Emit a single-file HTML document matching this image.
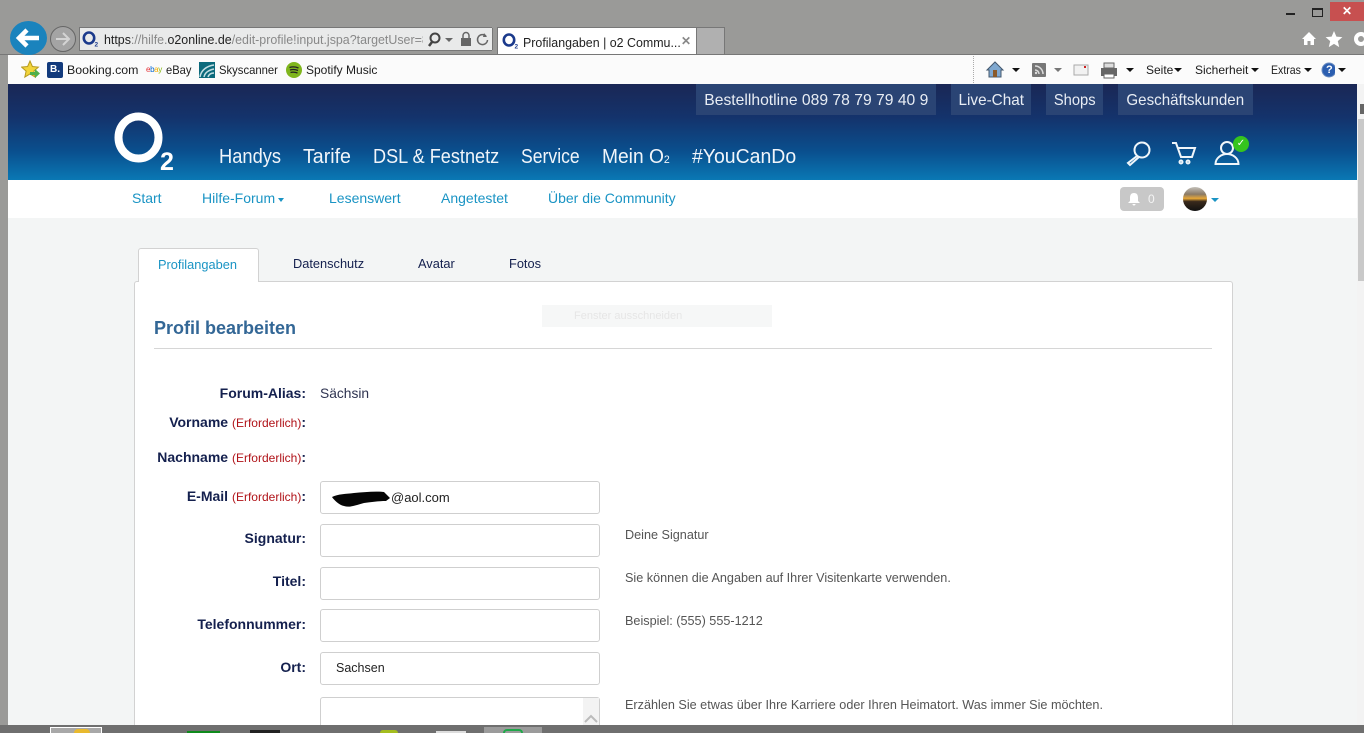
<!DOCTYPE html>
<html lang="de"><head><meta charset="utf-8"><title>Profilangaben | o2 Community</title>
<style>
html,body{margin:0;padding:0;width:1364px;height:733px;overflow:hidden;background:#9a9a98;font-family:"Liberation Sans",sans-serif}
.a{position:absolute;white-space:nowrap;line-height:1;transform-origin:left center}
.box{position:absolute;box-sizing:border-box;background:#fff;border:1px solid #cfcfcf;border-radius:3px}
.tb{font-size:12px;color:#1c1c1c}
.h{color:#f1f5fa;font-size:20px}
.top{position:absolute;top:84px;height:31px;background:#2a4474;color:#e8edf4;font-size:16px;line-height:33px;text-align:center;white-space:nowrap}
.top span{display:inline-block}
.n{color:#1a94c4;font-size:14px}
.l{color:#14204e;font-size:14px;font-weight:bold;right:1058px}
.l i{font-style:normal;font-weight:normal;font-size:12px;color:#b01218}
.hint{color:#555;font-size:12.650px;left:625px}
.t{font-size:12.800px;color:#14204e}
.arr{position:absolute;width:0;height:0;border-left:4px solid transparent;border-right:4px solid transparent;border-top:4px solid #111}
</style></head><body>
<div style="position:absolute;left:0;top:54px;width:1364px;height:1px;background:#777"></div>
<div style="position:absolute;left:8px;top:55px;width:1356px;height:29px;background:#fbfbfb"></div>

<!-- window controls -->
<div style="position:absolute;left:1286px;top:13px;width:9px;height:2px;background:#222"></div>
<div style="position:absolute;left:1312px;top:8px;width:9px;height:6px;border:1px solid #222;border-top-width:2px"></div>
<div style="position:absolute;left:1330px;top:2px;width:34px;height:19px;background:#c75050;color:#fff;font-size:12px;line-height:19px;text-align:center;font-weight:bold">✕</div>
<svg style="position:absolute;left:1300px;top:28px" width="64" height="22" viewBox="0 0 64 22"><path d="M2 11l7-7 7 7h-2v6h-3.500v-4h-3v4H4v-6z" fill="#fff"/><path d="M34 3l2.400 5.600 6 .5-4.600 4 1.400 6-5.200-3.200-5.200 3.200 1.400-6-4.600-4 6-.5z" fill="#fff"/><circle cx="61" cy="11" r="5" fill="none" stroke="#fff" stroke-width="4"/></svg>

<!-- back / forward -->
<div style="position:absolute;left:10px;top:21px;width:37px;height:34px;border-radius:50%;background:#1a83bd"></div>
<svg style="position:absolute;left:10px;top:21px" width="37" height="34"><path d="M9 17h20M17 9l-8 8 8 8" fill="none" stroke="#fff" stroke-width="4.500"/></svg>
<div style="position:absolute;left:50px;top:26px;width:24px;height:24px;border-radius:50%;border:1px solid #666;background:#a4a4a4"></div>
<svg style="position:absolute;left:51px;top:27px" width="24" height="24"><path d="M5 12h13M12 6l6 6-6 6" fill="none" stroke="#d4d4d4" stroke-width="2"/></svg>

<!-- address bar -->
<div style="position:absolute;left:79px;top:27px;width:413px;height:24px;box-sizing:border-box;background:#e9eaea;border:1px solid #777"></div>
<svg style="position:absolute;left:82px;top:30px" width="18" height="18"><ellipse cx="7" cy="8" rx="5.200" ry="5.500" fill="none" stroke="#1b3a8c" stroke-width="2.600"/><text x="12.500" y="16.500" font-family="Liberation Sans" font-weight="bold" font-size="6.500" fill="#1b3a8c">2</text></svg>
<div class="a" style="left:104px;top:33px;font-size:13px;color:#888;transform:scaleX(.955)"><span style="color:#222">https</span>://hilfe.<span style="color:#222">o2online.de</span>/edit-profile!input.jspa?targetUser=8</div>
<div style="position:absolute;left:423px;top:28px;width:69px;height:22px;background:#e9eaea;border-right:1px solid #777"></div>
<svg style="position:absolute;left:426px;top:31px" width="66" height="17"><circle cx="9" cy="7" r="4.500" fill="none" stroke="#444" stroke-width="2"/><path d="M6 11l-3 4" stroke="#444" stroke-width="2.500"/><path d="M19 7h8l-4 4z" fill="#666"/><rect x="35" y="7" width="10" height="8" fill="#666"/><path d="M37 7V4.500a3 3 0 0 1 6 0V7" fill="none" stroke="#666" stroke-width="1.500"/><path d="M60 5a5 5 0 1 0 1.500 4" fill="none" stroke="#666" stroke-width="1.500"/><path d="M58 2l3 4h-4z" fill="#666"/></svg>

<!-- tab -->
<div style="position:absolute;left:497px;top:27px;width:200px;height:27px;box-sizing:border-box;background:#fff;border:1px solid #777;border-bottom:0"></div>
<div style="position:absolute;left:697px;top:27px;width:28px;height:27px;box-sizing:border-box;background:#b0b0b0;border:1px solid #777;border-left:0;border-bottom:0"></div>
<svg style="position:absolute;left:502px;top:32px" width="18" height="18"><ellipse cx="7" cy="8" rx="5.200" ry="5.500" fill="none" stroke="#1b3a8c" stroke-width="2.600"/><text x="12.500" y="16.500" font-family="Liberation Sans" font-weight="bold" font-size="6.500" fill="#1b3a8c">2</text></svg>
<div class="a" style="left:523px;top:36px;font-size:13px;color:#222;transform:scaleX(.955)">Profilangaben | o2 Commu...</div>
<div class="a" style="left:681px;top:35px;font-size:12px;font-weight:bold;color:#888">✕</div>

<!-- favorites bar -->
<svg style="position:absolute;left:21px;top:60px" width="20" height="20"><path d="M9 1l2.400 5.500 6 .6-4.500 4 1.300 6L9 14l-5.200 3.100 1.300-6-4.500-4 6-.6z" fill="#f2d43a" stroke="#b69a20"/><path d="M9 12h5v-3l5 4.500-5 4.500v-3H9z" fill="#4fb04a"/></svg>
<div style="position:absolute;left:47px;top:62px;width:16px;height:16px;background:#123a7c;border-radius:2px;color:#fff;font:bold 10px/16px 'Liberation Sans';text-align:center">B.</div>
<div class="a tb" style="left:67px;top:64px;transform:scaleX(1.03)">Booking.com</div>
<div class="a" style="left:146px;top:66px;font-size:8px;letter-spacing:-.4px"><span style="color:#e53238">e</span><span style="color:#0064d2">b</span><span style="color:#f5af02">a</span><span style="color:#86b817">y</span></div>
<div class="a tb" style="left:166px;top:64px;transform:scaleX(.93)">eBay</div>
<svg style="position:absolute;left:199px;top:62px" width="16" height="16"><rect width="16" height="16" fill="#0c6a7c"/><path d="M1 15C2 8 8 4 15 3M5 15C6 10 10 8 15 7M9 15c1-3 3-4 6-4" fill="none" stroke="#c5dfe3" stroke-width="1.500"/></svg>
<div class="a tb" style="left:219px;top:64px;transform:scaleX(.94)">Skyscanner</div>
<svg style="position:absolute;left:286px;top:62px" width="16" height="16"><circle cx="8" cy="8" r="8" fill="#7fb51d"/><path d="M3.500 5.500c3-1 6-.8 9 .5M4 8c2.500-.8 5.500-.6 8 .5M4.500 10.500c2.200-.6 4.500-.5 7 .5" fill="none" stroke="#222" stroke-width="1.300"/></svg>
<div class="a tb" style="left:306px;top:64px">Spotify Music</div>
<div style="position:absolute;left:973px;top:56px;height:27px;border-left:1px dotted #aaa"></div>

<!-- command bar -->
<svg style="position:absolute;left:985px;top:60px" width="350" height="20">
<path d="M2 10l8-8 8 8h-2v7H4v-7z" fill="#7fa8d0" stroke="#44586e"/><rect x="8" y="10" width="4" height="7" fill="#8a5a2a"/>
<path d="M27 8h8l-4 4z" fill="#111"/>
<rect x="47" y="3" width="14" height="14" rx="1" fill="#777"/><path d="M50 6a8 8 0 0 1 8 8M50 10a4 4 0 0 1 4 4" stroke="#ddd" fill="none" stroke-width="1.500"/><circle cx="51" cy="13" r="1.200" fill="#ddd"/>
<path d="M73 8h8l-4 4z" fill="#777" transform="translate(-4 0)"/>
<rect x="89" y="5" width="14" height="10" fill="#f2f2f2" stroke="#aaa"/><rect x="99" y="6" width="2" height="2" fill="#c22"/>
<rect x="116" y="8" width="16" height="8" fill="#666"/><rect x="119" y="3" width="10" height="5" fill="#ddd" stroke="#666"/><rect x="119" y="14" width="10" height="4" fill="#fff" stroke="#666"/>
<path d="M141 8h8l-4 4z" fill="#111"/>
<path d="M189 8h8l-4 4z" fill="#111"/><path d="M266 8h8l-4 4z" fill="#111"/><path d="M319 8h8l-4 4z" fill="#111"/>
<circle cx="344" cy="10" r="7" fill="#2b5eb0" stroke="#6a8cc0"/>
</svg>
<div class="a tb" style="left:1146px;top:64px;">Seite</div>
<div class="a tb" style="left:1195px;top:64px;">Sicherheit</div>
<div class="a tb" style="left:1271px;top:64px;transform:scaleX(.88)">Extras</div>
<div class="a" style="left:1326px;top:65px;font-size:11px;font-weight:bold;color:#fff">?</div>
<div class="arr" style="left:1338px;top:68px"></div>

<!-- page -->
<div style="position:absolute;left:8px;top:84px;width:1349px;height:641px;background:#f3f5f5"></div>
<div style="position:absolute;left:8px;top:84px;width:1349px;height:96px;background:linear-gradient(#1a2755 0%,#14336c 35%,#0a4f8e 70%,#0a78b4 100%)"></div>
<div style="position:absolute;left:8px;top:180px;width:1349px;height:38px;background:#fff"></div>

<!-- scrollbar -->
<div style="position:absolute;left:1357px;top:84px;width:7px;height:641px;background:#f3f3f3"></div>
<div style="position:absolute;left:1358px;top:119px;width:6px;height:162px;background:#c9c9c9"></div>
<div style="position:absolute;left:1360px;top:104px;width:4px;height:10px;background:#666"></div>

<!-- top links -->
<div class="top" style="left:696px;width:240px"><span style="transform:scaleX(.98)">Bestellhotline 089 78 79 79 40 9</span></div>
<div class="top" style="left:951px;width:80px"><span style="transform:scaleX(.955)">Live-Chat</span></div>
<div class="top" style="left:1046px;width:57px"><span style="transform:scaleX(.92)">Shops</span></div>
<div class="top" style="left:1118px;width:135px"><span style="transform:scaleX(.945)">Geschäftskunden</span></div>

<!-- logo -->
<svg style="position:absolute;left:112px;top:110px" width="66" height="66"><ellipse cx="26.500" cy="27.500" rx="20" ry="21" fill="none" stroke="#fff" stroke-width="8"/><text x="48" y="60" font-family="Liberation Sans" font-weight="bold" font-size="25" fill="#fff">2</text></svg>

<!-- main nav -->
<div class="a h" style="left:219px;top:147px;transform:scaleX(.915)">Handys</div>
<div class="a h" style="left:303px;top:147px;transform:scaleX(.98)">Tarife</div>
<div class="a h" style="left:373px;top:147px;transform:scaleX(.906)">DSL &amp; Festnetz</div>
<div class="a h" style="left:521px;top:147px;transform:scaleX(.88)">Service</div>
<div class="a h" style="left:602px;top:147px;transform:scaleX(.96)">Mein O<span style="font-size:11px">2</span></div>
<div class="a h" style="left:692px;top:147px;transform:scaleX(.972)">#YouCanDo</div>

<!-- header icons -->
<svg style="position:absolute;left:1124px;top:138px" width="130" height="30" fill="none" stroke="#f0f6fa" stroke-width="2">
<circle cx="18" cy="12" r="7.500"/><path d="M13 18l-9 7 2 2 9-8"/>
<path d="M48 5h4l5 14h11l3-9H53"/><circle cx="57" cy="24" r="1.500"/><circle cx="64" cy="24" r="1.500"/>
<circle cx="103" cy="10" r="6"/><path d="M91.500 26c0-6 6-10 11.500-10s11.500 4 11.500 10z"/></svg>
<div style="position:absolute;left:1233px;top:136px;width:16px;height:16px;border-radius:50%;background:#35c41e;color:#fff;font-size:10px;line-height:16px;text-align:center">✓</div>

<!-- sub nav -->
<div class="a n" style="left:132px;top:191px">Start</div>
<div class="a n" style="left:202px;top:191px">Hilfe-Forum</div>
<div class="arr" style="left:278px;top:198px;border-top-color:#1a94c4;border-left-width:3.500px;border-right-width:3.500px"></div>
<div class="a n" style="left:329px;top:191px">Lesenswert</div>
<div class="a n" style="left:441px;top:191px">Angetestet</div>
<div class="a n" style="left:548px;top:191px">Über die Community</div>
<div style="position:absolute;left:1120px;top:187px;width:44px;height:24px;background:#c8c8c8;border-radius:4px"></div>
<svg style="position:absolute;left:1126px;top:191px" width="16" height="16"><path d="M8 2c3 0 4 2 4 5v3l2 2H2l2-2V7c0-3 1-5 4-5zM6.500 13h3a1.500 1.500 0 0 1-3 0z" fill="#fff"/></svg>
<div class="a" style="left:1148px;top:193px;font-size:12px;color:#f4f4f4">0</div>
<svg style="position:absolute;left:1183px;top:187px" width="24" height="24"><defs><linearGradient id="g" x1="0" y1="0" x2="0" y2="1"><stop offset="0" stop-color="#c4c1ba"/><stop offset=".3" stop-color="#8a7a66"/><stop offset=".48" stop-color="#e8a838"/><stop offset=".6" stop-color="#3a2a1c"/><stop offset="1" stop-color="#111"/></linearGradient></defs><circle cx="12" cy="12" r="12" fill="url(#g)"/></svg>
<div class="arr" style="left:1211px;top:198px;border-top-color:#1a94c4"></div>

<!-- tabs and card -->
<div style="position:absolute;left:134px;top:281px;width:1099px;height:444px;box-sizing:border-box;background:#fff;border:1px solid #d2d2d2;border-bottom:0;border-radius:3px 3px 0 0"></div>
<div style="position:absolute;left:138px;top:248px;width:121px;height:34px;box-sizing:border-box;background:#fff;border:1px solid #d2d2d2;border-bottom:0;border-radius:3px 3px 0 0"></div>
<div class="a t" style="left:158px;top:259px;color:#1a94c4">Profilangaben</div>
<div class="a t" style="left:293px;top:258px">Datenschutz</div>
<div class="a t" style="left:418px;top:258px">Avatar</div>
<div class="a t" style="left:509px;top:258px">Fotos</div>

<div class="a" style="left:154px;top:319px;font-size:18px;font-weight:bold;color:#336796">Profil bearbeiten</div>
<div style="position:absolute;left:154px;top:348px;width:1058px;height:1px;background:#d6d6d6"></div>
<div style="position:absolute;left:542px;top:305px;width:230px;height:22px;background:#f6f7f7"></div>
<div class="a" style="left:574px;top:311px;font-size:11px;color:#e6e6e6">Fenster ausschneiden</div>

<!-- form -->
<div class="a l" style="top:386px">Forum-Alias:</div>
<div class="a" style="left:320px;top:387px;font-size:13.800px;color:#2e3350">Sächsin</div>
<div class="a l" style="top:415px">Vorname <i>(Erforderlich)</i>:</div>
<div class="a l" style="top:450px">Nachname <i>(Erforderlich)</i>:</div>
<div class="a l" style="top:489px">E-Mail <i>(Erforderlich)</i>:</div>
<div class="box" style="left:320px;top:481px;width:280px;height:33px"></div>
<svg style="position:absolute;left:330px;top:489px" width="62" height="20"><path d="M2 8c6-3 14-3 22-4 10-1 22-2 30-1l6 6-4 3c-8 0-14 1-22 2-8 2-14 5-20 3-5-1-10-6-12-9z" fill="#050505"/></svg>
<div class="a" style="left:391px;top:491px;font-size:13px;color:#222">@aol.com</div>
<div class="a l" style="top:531px">Signatur:</div>
<div class="box" style="left:320px;top:524px;width:280px;height:33px"></div>
<div class="a hint" style="top:529px">Deine Signatur</div>
<div class="a l" style="top:574px">Titel:</div>
<div class="box" style="left:320px;top:567px;width:280px;height:33px"></div>
<div class="a hint" style="top:572px">Sie können die Angaben auf Ihrer Visitenkarte verwenden.</div>
<div class="a l" style="top:617px">Telefonnummer:</div>
<div class="box" style="left:320px;top:609px;width:280px;height:33px"></div>
<div class="a hint" style="top:615px">Beispiel: (555) 555-1212</div>
<div class="a l" style="top:660px">Ort:</div>
<div class="box" style="left:320px;top:652px;width:280px;height:33px"></div>
<div class="a" style="left:336px;top:662px;font-size:12.500px;color:#222">Sachsen</div>
<div class="box" style="left:320px;top:697px;width:280px;height:36px"></div>
<div style="position:absolute;left:583px;top:698px;width:16px;height:27px;background:#f3f3f3"></div>
<svg style="position:absolute;left:583px;top:713px" width="16" height="12"><path d="M2 9l6-6 6 6" fill="none" stroke="#bbb" stroke-width="2"/></svg>
<div class="a hint" style="top:699px">Erzählen Sie etwas über Ihre Karriere oder Ihren Heimatort. Was immer Sie möchten.</div>

<!-- taskbar -->
<div style="position:absolute;left:0;top:725px;width:1364px;height:8px;background:#6f6f6f"></div>
<div style="position:absolute;left:50px;top:727px;width:52px;height:6px;box-sizing:border-box;background:#a8a8a8;border:1px solid #fff;border-bottom:0"></div>
<div style="position:absolute;left:74px;top:729px;width:16px;height:4px;border-radius:8px 8px 0 0;background:#e8b92e"></div>
<div style="position:absolute;left:187px;top:731px;width:33px;height:2px;background:#0e8a1c"></div>
<div style="position:absolute;left:250px;top:730px;width:30px;height:3px;background:#222"></div>
<div style="position:absolute;left:380px;top:730px;width:18px;height:3px;border-radius:8px 8px 0 0;background:#a4bd1e"></div>
<div style="position:absolute;left:436px;top:731px;width:30px;height:2px;background:#ddd"></div>
<div style="position:absolute;left:484px;top:727px;width:58px;height:6px;background:#9b9b9b"></div>
<div style="position:absolute;left:503px;top:729px;width:20px;height:4px;border-radius:10px 10px 0 0;border:2px solid #1fa84a;border-bottom:0;box-sizing:border-box"></div>
</body></html>
